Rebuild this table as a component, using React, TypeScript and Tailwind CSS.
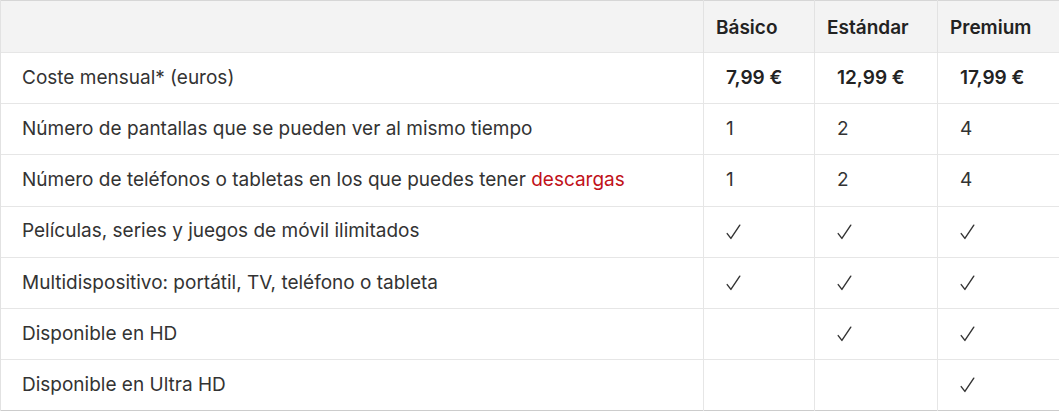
const rows: { label: React.ReactNode; values: (string | boolean)[]; bold?: boolean }[] = [
  { label: "Coste mensual* (euros)", values: ["7,99 €", "12,99 €", "17,99 €"], bold: true },
  { label: "Número de pantallas que se pueden ver al mismo tiempo", values: ["1", "2", "4"] },
  {
    label: (
      <>
        Número de teléfonos o tabletas en los que puedes tener <span className="text-[#c11119]">descargas</span>
      </>
    ),
    values: ["1", "2", "4"],
  },
  { label: "Películas, series y juegos de móvil ilimitados", values: [true, true, true] },
  { label: "Multidispositivo: portátil, TV, teléfono o tableta", values: [true, true, true] },
  { label: "Disponible en HD", values: [false, true, true] },
  { label: "Disponible en Ultra HD", values: [false, false, true] },
];

function Check() {
  return (
    <svg width="15" height="16" viewBox="0 0 15 16" className="block">
      <path d="M1.2 9.6 L4.9 14.4 L13.8 1.2" fill="none" stroke="#333" strokeWidth="1.4" strokeLinecap="round" strokeLinejoin="round" />
    </svg>
  );
}

export default function App() {
  const plans = ["Básico", "Estándar", "Premium"];
  return (
    <div className="w-[1059px] h-[411px] overflow-hidden bg-white text-[#333] font-['Inter','Liberation_Sans',sans-serif] text-[19px]">
      <table className="w-full table-fixed border-collapse">
        <colgroup>
          <col className="w-[703px]" />
          <col className="w-[111px]" />
          <col className="w-[123px]" />
          <col />
        </colgroup>
        <thead>
          <tr className="h-[52px] bg-[#f3f3f3] border-t border-t-[#d6d6d6]">
            <th className="border-l border-l-[#e2e2e2]" />
            {plans.map((p) => (
              <th key={p} className="border-l border-[#e2e2e2] pl-3 pt-[3px] text-left font-semibold text-[#222]">
                {p}
              </th>
            ))}
          </tr>
        </thead>
        <tbody>
          {rows.map((r, i) => (
            <tr key={i} className={`h-[51.2px] border-t border-[#e6e6e6] ${i === rows.length - 1 ? "border-b border-b-[#cccccc]" : ""}`}>
              <td className="border-l border-l-[#e2e2e2] pl-[21px] pr-3">{r.label}</td>
              {r.values.map((v, j) => (
                <td
                  key={j}
                  className={`border-l border-[#e6e6e6] pl-[22px] ${r.bold ? "font-semibold text-[#222]" : ""}`}
                >
                  {typeof v === "string" ? v : v ? <Check /> : null}
                </td>
              ))}
            </tr>
          ))}
        </tbody>
      </table>
    </div>
  );
}
